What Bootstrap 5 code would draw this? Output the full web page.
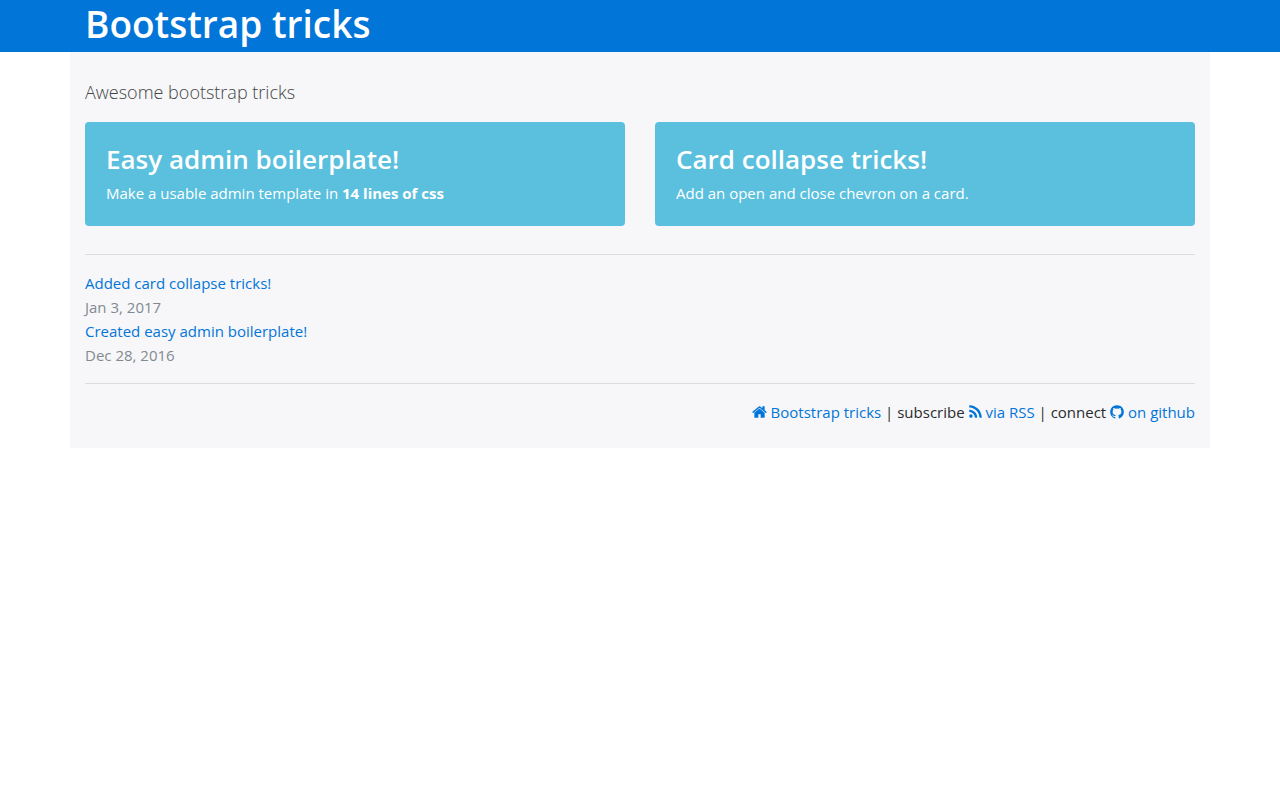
<!DOCTYPE html>
<html lang="en">
<head>
<meta charset="utf-8">
<meta name="viewport" content="width=device-width, initial-scale=1">
<title>Bootstrap tricks</title>
<link rel="stylesheet" href="https://cdn.jsdelivr.net/npm/bootstrap@5.3.0/dist/css/bootstrap.min.css">
<style>
body { font-family: "Open Sans", "Noto Sans", sans-serif; font-size: 15px; line-height: 24px; color: #292b2c; }
a { color: #0275d8; text-decoration: none; }
a:hover { text-decoration: underline; }
.page { max-width: 1140px; padding-left: 15px; padding-right: 15px; }
.masthead { background: #0275d8; color: #fff; padding-bottom: 4px; }
.masthead h1 { font-size: 37px; line-height: 48px; font-weight: 600; margin: 0; }
.panel { background: #f7f7f9; padding-top: 28px; padding-bottom: 24px; }
.intro { font-size: 18px; line-height: 24px; font-weight: 300; color: #434546; margin-bottom: 18px; }
.tricks { --bs-gutter-x: 30px; --bs-gutter-y: 12px; }
.trick { background: #5bc0de; color: #fff; border-radius: 4px; padding: 21px; border: 0; }
.trick:hover { color: #fff; }
.trick h3 { font-size: 26px; line-height: 32px; font-weight: 600; margin: 0 0 6px; }
.rule { margin: 0; border-top: 1px solid #dcdcde; opacity: 1; }
.tricks + .rule { margin-top: 28px; }
.posted { color: #818a91; }
.icon { height: 16px; fill: currentColor; vertical-align: -2px; }
</style>
</head>
<body>
<header class="masthead"><div class="container page"><h1>Bootstrap tricks</h1></div></header>
<main class="container page panel">
  <p class="intro">Awesome bootstrap tricks</p>
  <div class="row tricks">
    <div class="col-md-6"><a class="card trick" href="#"><h3>Easy admin boilerplate!</h3><span>Make a usable admin template in <strong>14 lines of css</strong></span></a></div>
    <div class="col-md-6"><a class="card trick" href="#"><h3>Card collapse tricks!</h3><span>Add an open and close chevron on a card.</span></a></div>
  </div>
  <hr class="rule">
  <div class="py-3">
    <a href="#">Added card collapse tricks!</a><div class="posted">Jan 3, 2017</div>
    <a href="#">Created easy admin boilerplate!</a><div class="posted">Dec 28, 2016</div>
  </div>
  <hr class="rule">
  <footer class="pt-3 text-end">
    <a href="#"><svg class="icon" width="15" viewBox="64 0 1664 1792" aria-hidden="true"><path d="M1472 992v480q0 26-19 45t-45 19h-384v-384h-256v384h-384q-26 0-45-19t-19-45v-480q0-1 .5-3t.5-3l575-474 575 474q1 2 1 6zm223-69l-62 74q-8 9-21 11h-3q-13 0-21-7l-692-577-692 577q-12 8-24 7-13-2-21-11l-62-74q-8-10-7-23.5t11-21.5l719-599q32-26 76-26t76 26l244 204v-195q0-14 9-23t23-9h192q14 0 23 9t9 23v408l219 182q10 8 11 21.5t-7 23.5z"/></svg> Bootstrap tricks</a>
    | subscribe
    <a href="#"><svg class="icon" width="13" viewBox="192 0 1408 1792" aria-hidden="true"><path d="M576 1344q0 80-56 136t-136 56-136-56-56-136 56-136 136-56 136 56 56 136zm512 123q2 28-17 48-18 21-47 21h-135q-25 0-43-16.5t-20-41.5q-22-229-184.5-391.5t-391.5-184.5q-25-2-41.5-20t-16.5-43v-135q0-29 21-47 17-17 43-17h5q160 13 306 80.5t259 181.5q114 113 181.5 259t80.5 306zm512 2q2 27-18 47-18 20-46 20h-143q-26 0-44.5-17.5t-19.5-42.5q-12-215-101-408.5t-231.5-336-336-231.5-408.5-102q-25-1-42.5-19.5t-17.5-43.5v-143q0-28 20-46 18-18 44-18h3q262 13 501.5 120t425.5 294q187 186 294 425.5t120 501.5z"/></svg> via RSS</a>
    | connect
    <a href="#"><svg class="icon" width="14" viewBox="128 0 1536 1792" aria-hidden="true"><path d="M896 128q209 0 385.5 103t279.5 279.5 103 385.5q0 251-146.5 451.5t-378.5 277.5q-27 5-40-7t-13-30q0-3 .5-76.5t.5-134.5q0-97-52-142 57-6 102.5-18t94-39 81-66.5 53-105 20.5-150.5q0-119-79-206 37-91-8-204-28-9-81 11t-92 44l-38 24q-93-26-192-26t-192 26q-16-11-42.5-27t-83.5-38.5-85-13.5q-45 113-8 204-79 87-79 206 0 85 20.5 150t52.5 105 80.5 67 94 39 102.5 18q-39 36-49 103-21 10-45 15t-57 5-65.5-21.5-55.5-62.5q-19-32-48.5-52t-49.5-24l-20-3q-21 0-29 4.5t-5 11.5 9 14 13 12l7 5q22 10 43.5 38t31.5 51l10 23q13 38 44 61.5t67 30 69.5 7 55.5-3.5l23-4q0 38 .5 88.5t.5 54.5q0 18-13 30t-40 7q-232-77-378.5-277.5t-146.5-451.5q0-209 103-385.5t279.5-279.5 385.5-103z"/></svg> on github</a>
  </footer>
</main>
<script src="https://cdn.jsdelivr.net/npm/bootstrap@5.3.0/dist/js/bootstrap.bundle.min.js"></script>
</body>
</html>
